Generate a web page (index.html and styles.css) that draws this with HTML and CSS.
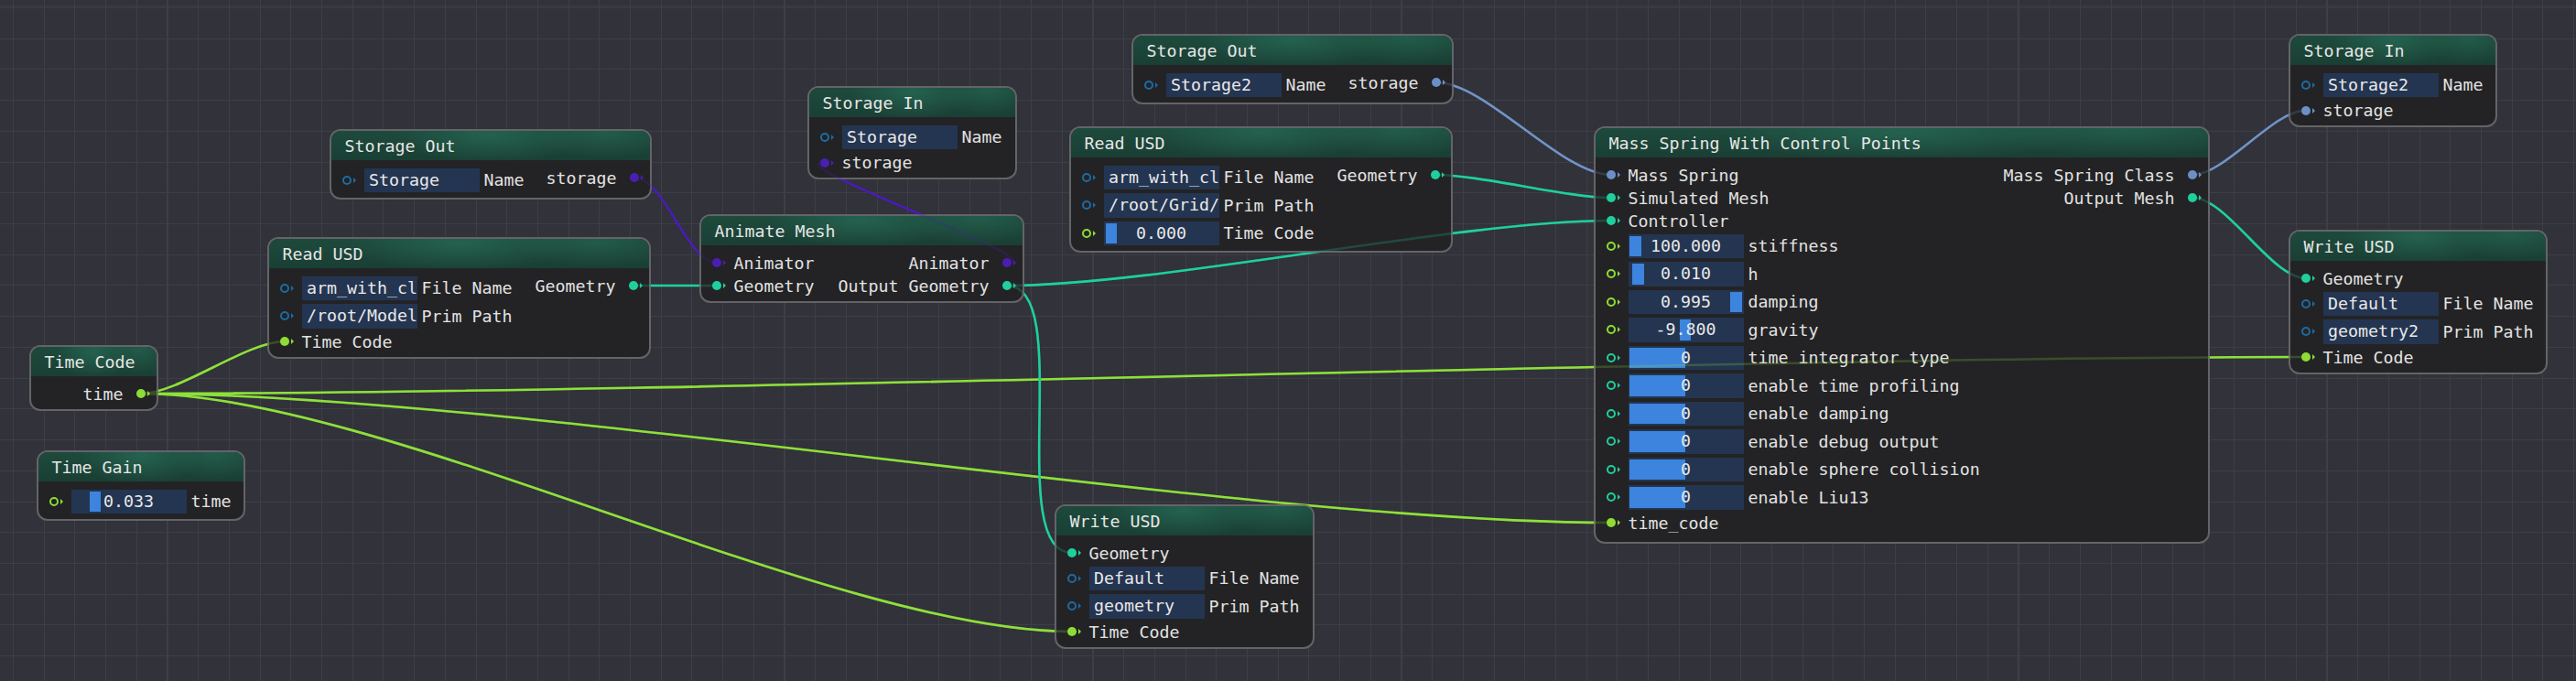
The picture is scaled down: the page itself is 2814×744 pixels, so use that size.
FILE: index.html
```html
<!DOCTYPE html>
<html lang="en">
<head>
<meta charset="utf-8">
<title>Node Editor</title>
<link rel="stylesheet" href="styles.css">
</head>
<body>
<div class="canvas">
  <svg class="links links-under" width="2814" height="744"></svg>

  <!-- Storage Out A -->
  <div class="node n-soa">
    <div class="node-head">Storage Out</div>
    <div class="node-body">
      <div class="col">
        <div class="row row-in row-field"><span class="pin ring c-blue"></span><span class="field">Storage</span><span class="lbl">Name</span></div>
      </div>
      <div class="col col-out">
        <div class="row row-out"><span class="lbl">storage</span><span class="pin fill c-purple" id="soa-st"></span></div>
      </div>
    </div>
  </div>

  <!-- Read USD A -->
  <div class="node n-rua">
    <div class="node-head">Read USD</div>
    <div class="node-body">
      <div class="col">
        <div class="row row-in row-field"><span class="pin ring c-blue"></span><span class="field">arm_with_cl</span><span class="lbl">File Name</span></div>
        <div class="row row-in row-field"><span class="pin ring c-blue"></span><span class="field">/root/Model</span><span class="lbl">Prim Path</span></div>
        <div class="row row-in"><span class="pin fill c-yg" id="rua-tc"></span><span class="lbl">Time Code</span></div>
      </div>
      <div class="col col-out">
        <div class="row row-out"><span class="lbl">Geometry</span><span class="pin fill c-teal" id="rua-geo"></span></div>
      </div>
    </div>
  </div>

  <!-- Time Code -->
  <div class="node n-tc">
    <div class="node-head">Time Code</div>
    <div class="node-body">
      <div class="col col-out">
        <div class="row row-out"><span class="lbl">time</span><span class="pin fill c-yg" id="tc-time"></span></div>
      </div>
    </div>
  </div>

  <!-- Time Gain -->
  <div class="node n-tg">
    <div class="node-head">Time Gain</div>
    <div class="node-body">
      <div class="col">
        <div class="row row-in row-field"><span class="pin ring c-yg"></span><span class="field slider"><span class="grab" style="left:20px"></span><span class="val">0.033</span></span><span class="lbl">time</span></div>
      </div>
    </div>
  </div>

  <!-- Storage In A -->
  <div class="node n-sia">
    <div class="node-head">Storage In</div>
    <div class="node-body">
      <div class="col">
        <div class="row row-in row-field"><span class="pin ring c-blue"></span><span class="field">Storage</span><span class="lbl">Name</span></div>
        <div class="row row-in"><span class="pin fill c-purple" id="sia-st"></span><span class="lbl">storage</span></div>
      </div>
    </div>
  </div>

  <!-- Animate Mesh -->
  <div class="node n-am">
    <div class="node-head">Animate Mesh</div>
    <div class="node-body">
      <div class="col">
        <div class="row row-in"><span class="pin fill c-purple" id="am-anim-in"></span><span class="lbl">Animator</span></div>
        <div class="row row-in"><span class="pin fill c-teal" id="am-geo-in"></span><span class="lbl">Geometry</span></div>
      </div>
      <div class="col col-out">
        <div class="row row-out"><span class="lbl">Animator</span><span class="pin fill c-purple" id="am-anim-out"></span></div>
        <div class="row row-out"><span class="lbl">Output Geometry</span><span class="pin fill c-teal" id="am-geo-out"></span></div>
      </div>
    </div>
  </div>

  <!-- Storage Out B -->
  <div class="node n-sob">
    <div class="node-head">Storage Out</div>
    <div class="node-body">
      <div class="col">
        <div class="row row-in row-field"><span class="pin ring c-blue"></span><span class="field">Storage2</span><span class="lbl">Name</span></div>
      </div>
      <div class="col col-out">
        <div class="row row-out"><span class="lbl">storage</span><span class="pin fill c-steel" id="sob-st"></span></div>
      </div>
    </div>
  </div>

  <!-- Read USD B -->
  <div class="node n-rub">
    <div class="node-head">Read USD</div>
    <div class="node-body">
      <div class="col">
        <div class="row row-in row-field"><span class="pin ring c-blue"></span><span class="field">arm_with_cl</span><span class="lbl">File Name</span></div>
        <div class="row row-in row-field"><span class="pin ring c-blue"></span><span class="field">/root/Grid/</span><span class="lbl">Prim Path</span></div>
        <div class="row row-in row-field"><span class="pin ring c-yg"></span><span class="field slider"><span class="grab" style="left:2px"></span><span class="val">0.000</span></span><span class="lbl">Time Code</span></div>
      </div>
      <div class="col col-out">
        <div class="row row-out"><span class="lbl">Geometry</span><span class="pin fill c-teal" id="rub-geo"></span></div>
      </div>
    </div>
  </div>

  <!-- Write USD A -->
  <div class="node n-wua">
    <div class="node-head">Write USD</div>
    <div class="node-body">
      <div class="col">
        <div class="row row-in"><span class="pin fill c-teal" id="wua-geo"></span><span class="lbl">Geometry</span></div>
        <div class="row row-in row-field"><span class="pin ring c-blue"></span><span class="field">Default</span><span class="lbl">File Name</span></div>
        <div class="row row-in row-field"><span class="pin ring c-blue"></span><span class="field">geometry</span><span class="lbl">Prim Path</span></div>
        <div class="row row-in"><span class="pin fill c-yg" id="wua-tc"></span><span class="lbl">Time Code</span></div>
      </div>
    </div>
  </div>

  <!-- Mass Spring With Control Points -->
  <div class="node n-ms">
    <div class="node-head">Mass Spring With Control Points</div>
    <div class="node-body">
      <div class="col">
        <div class="row row-in"><span class="pin fill c-steel" id="ms-ms"></span><span class="lbl">Mass Spring</span></div>
        <div class="row row-in"><span class="pin fill c-teal" id="ms-sim"></span><span class="lbl">Simulated Mesh</span></div>
        <div class="row row-in"><span class="pin fill c-teal" id="ms-ctrl"></span><span class="lbl">Controller</span></div>
        <div class="row row-in row-field"><span class="pin ring c-yg"></span><span class="field slider"><span class="grab" style="left:1.5px"></span><span class="val">100.000</span></span><span class="lbl">stiffness</span></div>
        <div class="row row-in row-field"><span class="pin ring c-yg"></span><span class="field slider"><span class="grab" style="left:4.5px"></span><span class="val">0.010</span></span><span class="lbl">h</span></div>
        <div class="row row-in row-field"><span class="pin ring c-yg"></span><span class="field slider"><span class="grab" style="left:111.5px"></span><span class="val">0.995</span></span><span class="lbl">damping</span></div>
        <div class="row row-in row-field"><span class="pin ring c-yg"></span><span class="field slider"><span class="grab" style="left:56px"></span><span class="val">-9.800</span></span><span class="lbl">gravity</span></div>
        <div class="row row-in row-field"><span class="pin ring c-teal"></span><span class="field slider"><span class="grab grab-int"></span><span class="val">0</span></span><span class="lbl">time integrator type</span></div>
        <div class="row row-in row-field"><span class="pin ring c-teal"></span><span class="field slider"><span class="grab grab-int"></span><span class="val">0</span></span><span class="lbl">enable time profiling</span></div>
        <div class="row row-in row-field"><span class="pin ring c-teal"></span><span class="field slider"><span class="grab grab-int"></span><span class="val">0</span></span><span class="lbl">enable damping</span></div>
        <div class="row row-in row-field"><span class="pin ring c-teal"></span><span class="field slider"><span class="grab grab-int"></span><span class="val">0</span></span><span class="lbl">enable debug output</span></div>
        <div class="row row-in row-field"><span class="pin ring c-teal"></span><span class="field slider"><span class="grab grab-int"></span><span class="val">0</span></span><span class="lbl">enable sphere collision</span></div>
        <div class="row row-in row-field"><span class="pin ring c-teal"></span><span class="field slider"><span class="grab grab-int"></span><span class="val">0</span></span><span class="lbl">enable Liu13</span></div>
        <div class="row row-in"><span class="pin fill c-yg" id="ms-tc"></span><span class="lbl">time_code</span></div>
      </div>
      <div class="col col-out">
        <div class="row row-out"><span class="lbl">Mass Spring Class</span><span class="pin fill c-steel" id="ms-class"></span></div>
        <div class="row row-out"><span class="lbl">Output Mesh</span><span class="pin fill c-teal" id="ms-out"></span></div>
      </div>
    </div>
  </div>

  <!-- Storage In B -->
  <div class="node n-sib">
    <div class="node-head">Storage In</div>
    <div class="node-body">
      <div class="col">
        <div class="row row-in row-field"><span class="pin ring c-blue"></span><span class="field">Storage2</span><span class="lbl">Name</span></div>
        <div class="row row-in"><span class="pin fill c-steel" id="sib-st"></span><span class="lbl">storage</span></div>
      </div>
    </div>
  </div>

  <!-- Write USD B -->
  <div class="node n-wub">
    <div class="node-head">Write USD</div>
    <div class="node-body">
      <div class="col">
        <div class="row row-in"><span class="pin fill c-teal" id="wub-geo"></span><span class="lbl">Geometry</span></div>
        <div class="row row-in row-field"><span class="pin ring c-blue"></span><span class="field">Default</span><span class="lbl">File Name</span></div>
        <div class="row row-in row-field"><span class="pin ring c-blue"></span><span class="field">geometry2</span><span class="lbl">Prim Path</span></div>
        <div class="row row-in"><span class="pin fill c-yg" id="wub-tc"></span><span class="lbl">Time Code</span></div>
      </div>
    </div>
  </div>

  <svg class="links links-over" width="2814" height="744"></svg>
</div>
<script src="script.js"></script>
</body>
</html>
```

FILE: styles.css
```css
* { box-sizing: border-box; }

html, body {
  margin: 0;
  padding: 0;
}

body {
  width: 2814px;
  height: 744px;
  overflow: hidden;
  background: #31323a;
  font-family: "DejaVu Sans Mono", "Liberation Mono", monospace;
  font-size: 18.3px;
  color: #e2e2e2;
}

.canvas {
  position: relative;
  width: 2814px;
  height: 744px;
  background-color: #31323a;
  background-image:
    repeating-linear-gradient(90deg, #3e3f46 0 1px, transparent 1px 33.7px),
    repeating-linear-gradient(180deg, #3e3f46 0 1px, transparent 1px 33.72px);
  background-position: 14px 0, 0 8px;
}

.links {
  position: absolute;
  left: 0;
  top: 0;
  width: 2814px;
  height: 744px;
  pointer-events: none;
}

.links-under { z-index: 1; }
.links-over { z-index: 3; opacity: 0.22; }

/* ---------- nodes ---------- */
.node {
  position: absolute;
  z-index: 2;
  border: 2px solid #646468;
  border-radius: 12px;
  background: #232325;
  overflow: hidden;
}

.node-head {
  height: 32px;
  display: flex;
  align-items: center;
  padding-left: 14.5px;
  white-space: nowrap;
  color: #e6e6e6;
  background:
    radial-gradient(ellipse 30% 95% at 50% 15%, rgba(42, 118, 94, 0.55), rgba(42, 118, 94, 0) 100%),
    radial-gradient(ellipse 22% 85% at 86% 10%, rgba(42, 118, 94, 0.4), rgba(42, 118, 94, 0) 100%),
    linear-gradient(180deg, #1d4a3c 0%, #1a3f34 100%);
}

.node-body {
  display: flex;
  padding: 8.5px 12px 6px;
}

.col {
  display: flex;
  flex-direction: column;
  gap: 4px;
}

.col-out {
  margin-left: auto;
  align-items: flex-end;
}

.row {
  display: flex;
  align-items: center;
  height: 21px;
  line-height: 21px;
  white-space: nowrap;
}

.row-field { height: 26.5px; }

.row-in .pin { margin-right: 13.5px; }
.row-out .pin { margin-left: 14.5px; }

/* ---------- pins ---------- */
.pin {
  position: relative;
  flex: none;
  width: 10px;
  height: 10px;
  border-radius: 50%;
}

.pin::after {
  content: "";
  position: absolute;
  left: 11.5px;
  top: 2px;
  border-left: 3px solid var(--pc);
  border-top: 3px solid transparent;
  border-bottom: 3px solid transparent;
}

.ring { border: 2px solid var(--pc); }
.ring::after { left: 9.5px; top: 0; }
.fill { background: var(--pc); }

.c-blue { --pc: #1d6ba4; }
.c-yg { --pc: #8edc36; }
.c-teal { --pc: #1fcf9d; }
.c-purple { --pc: #4b1eb3; }
.c-steel { --pc: #6c8fc6; }

/* ---------- fields ---------- */
.field {
  position: relative;
  flex: none;
  width: 126px;
  height: 26.5px;
  line-height: 26.5px;
  padding-left: 5.5px;
  margin-right: 5px;
  overflow: hidden;
  background: #243551;
  color: #e8e8e8;
}

.slider {
  padding-left: 0;
  text-align: center;
}

.grab {
  position: absolute;
  top: 2px;
  bottom: 2px;
  width: 12.5px;
  background: #3d84de;
}

.grab-int {
  left: 1.5px;
  width: 61px;
}

.val { position: relative; }

/* ---------- node placement on the canvas ---------- */
.n-soa { left: 360px;  top: 141px; width: 352px; }
.n-rua { left: 292px;  top: 259px; width: 419px; }
.n-tc  { left: 32px;   top: 377px; width: 141px; }
.n-tg  { left: 40px;   top: 492px; width: 228px; }
.n-sia { left: 882px;  top: 94px;  width: 229px; }
.n-am  { left: 764px;  top: 234px; width: 355px; }
.n-sob { left: 1236px; top: 37px;  width: 352px; }
.n-rub { left: 1168px; top: 138px; width: 419px; }
.n-wua { left: 1152px; top: 551px; width: 284px; }
.n-ms  { left: 1741px; top: 138px; width: 673px; }
.n-ms .node-body { padding-bottom: 10.5px; }
.n-sib { left: 2500px; top: 37px;  width: 228px; }
.n-wub { left: 2500px; top: 251px; width: 283px; }
```

FILE: script.js
```js
(function () {
  var NS = 'http://www.w3.org/2000/svg';
  var colors = {
    yg: '#8ee03a',
    teal: '#1fcf9e',
    purple: '#4a1cb6',
    steel: '#7193c6'
  };
  var links = [
    ['tc-time', 'rua-tc', 'yg'],
    ['tc-time', 'ms-tc', 'yg'],
    ['tc-time', 'wua-tc', 'yg'],
    ['tc-time', 'wub-tc', 'yg'],
    ['rua-geo', 'am-geo-in', 'teal'],
    ['soa-st', 'am-anim-in', 'purple'],
    ['am-anim-out', 'sia-st', 'purple'],
    ['am-geo-out', 'wua-geo', 'teal'],
    ['am-geo-out', 'ms-ctrl', 'teal'],
    ['rub-geo', 'ms-sim', 'teal'],
    ['sob-st', 'ms-ms', 'steel'],
    ['ms-class', 'sib-st', 'steel'],
    ['ms-out', 'wub-geo', 'teal']
  ];
  var canvas = document.querySelector('.canvas');
  var cr = canvas.getBoundingClientRect();

  function center(id) {
    var r = document.getElementById(id).getBoundingClientRect();
    return [r.left + r.width / 2 - cr.left, r.top + r.height / 2 - cr.top];
  }

  var svgs = document.querySelectorAll('.links');
  links.forEach(function (l) {
    var a = center(l[0]);
    var b = center(l[1]);
    var dx = b[0] - a[0], dy = b[1] - a[1];
    var off = 0.25 * Math.sqrt(dx * dx + dy * dy);
    var d = 'M' + a[0] + ' ' + a[1] +
      ' C' + (a[0] + off) + ' ' + a[1] + ' ' +
      (b[0] - off) + ' ' + b[1] + ' ' +
      b[0] + ' ' + b[1];
    for (var i = 0; i < svgs.length; i++) {
      var p = document.createElementNS(NS, 'path');
      p.setAttribute('d', d);
      p.setAttribute('fill', 'none');
      p.setAttribute('stroke', colors[l[2]]);
      p.setAttribute('stroke-width', '2.6');
      svgs[i].appendChild(p);
    }
  });
})();
```
